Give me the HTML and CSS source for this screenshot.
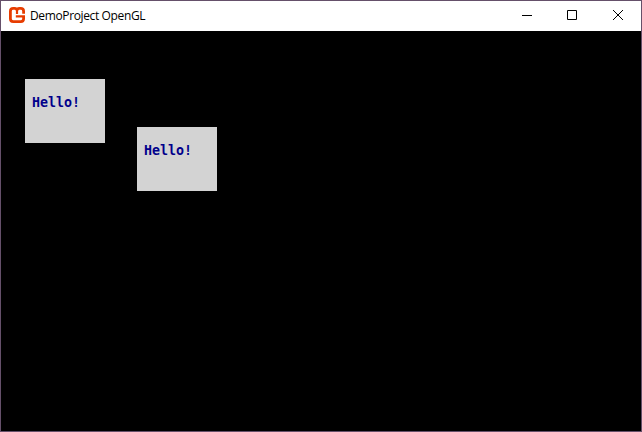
FILE: index.html
```html
<!DOCTYPE html>
<html lang="en">
<head>
<meta charset="utf-8">
<title>DemoProject OpenGL</title>
<link rel="stylesheet" href="styles.css">
</head>
<body>
<div class="window">
  <header class="titlebar">
    <svg class="logo" width="16" height="16" viewBox="0 0 16 16" fill="none" stroke="#e73c00" stroke-width="2.8">
      <path d="M14.6 6.8V4.2Q14.6 1.4 11.8 1.4H10.4Q8 1.4 8 3.6Q8 1.4 5.6 1.4H4.2Q1.4 1.4 1.4 4.2V11.8Q1.4 14.6 4.2 14.6H11.8Q14.6 14.6 14.6 11.8V9.4"/>
      <path d="M8 3V7M6.8 9.3H16" stroke-width="2.2"/>
    </svg>
    <h1 class="title">DemoProject OpenGL</h1>
    <div class="controls">
      <svg class="minimize" width="10" height="10" viewBox="0 0 10 10" stroke="#000" fill="none"><path d="M0 5.5H10"/></svg>
      <svg width="10" height="10" viewBox="0 0 10 10" stroke="#000" fill="none"><path d="M.5 .5H9.5V9.5H.5Z"/></svg>
      <svg width="10" height="10" viewBox="0 0 10 10" stroke="#000" fill="none"><path d="M0 0L10 10M10 0L0 10"/></svg>
    </div>
  </header>
  <main class="canvas">
    <div class="box first">Hello!</div>
    <div class="box second">Hello!</div>
  </main>
</div>
</body>
</html>
```
FILE: styles.css
```css
* { box-sizing: border-box; }
body { margin: 0; }
.window {
  width: 642px;
  height: 432px;
  border: 1px solid #65506a;
  display: flex;
  flex-direction: column;
  background: #000;
}
.titlebar {
  height: 30px;
  flex: none;
  display: flex;
  align-items: center;
  padding: 0 18px 0 8px;
  background: #fff;
}
.logo { margin-top: -2px; }
.title {
  margin: 0 0 0 5px;
  font: 400 12px/16px "Open Sans", "Noto Sans", sans-serif;
  letter-spacing: -0.37px;
  color: #000;
}
.controls {
  display: flex;
  gap: 36px;
  margin: -2px 0 0 auto;
}
.minimize { margin-right: -1px; }
.canvas { position: relative; flex: 1; }
.box {
  position: absolute;
  width: 80px;
  height: 64px;
  padding: 16px 7px;
  background: #d3d3d3;
  color: #00008b;
  font: 700 13.3px/16px "DejaVu Sans Mono", monospace;
}
.first { left: 24px; top: 48px; }
.second { left: 136px; top: 96px; }
```
